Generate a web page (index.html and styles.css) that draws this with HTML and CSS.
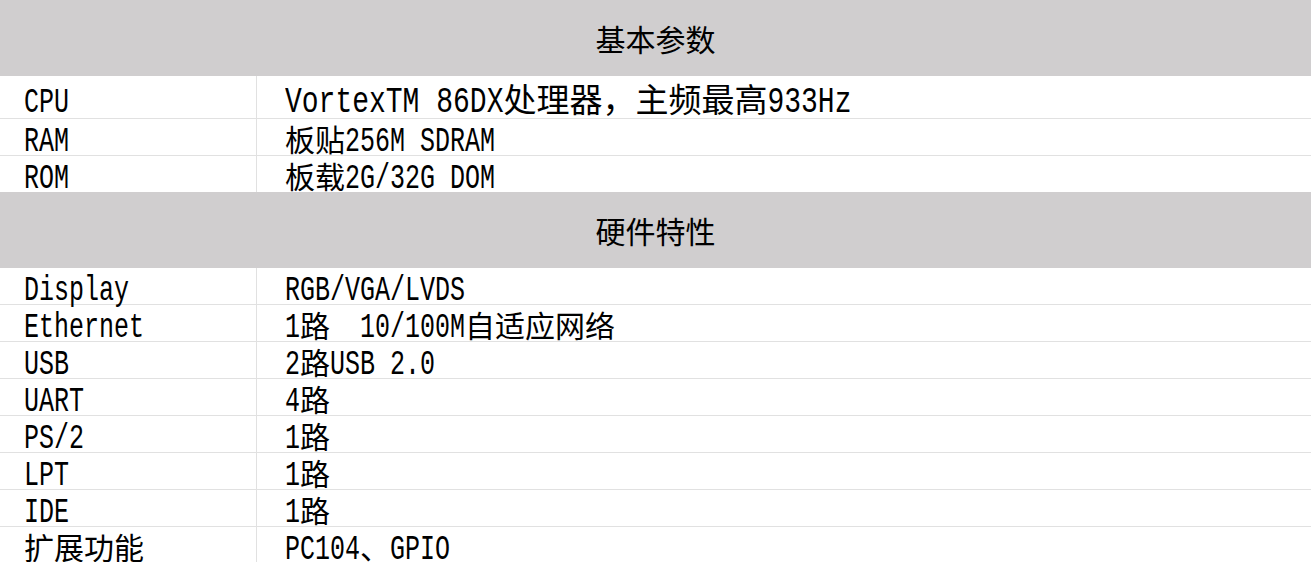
FILE: index.html
```html
<!DOCTYPE html>
<html lang="zh-CN">
<head>
<meta charset="utf-8">
<title>基本参数</title>
<link rel="stylesheet" href="styles.css">
</head>
<body>
<div class="spec">
  <div class="head">基本参数</div>
  <div class="row big"><div class="k"><span class="l">CPU</span></div><div class="v"><span class="l">VortexTM 86DX</span>处理器，主频最高<span class="l">933Hz</span></div></div>
  <div class="row"><div class="k"><span class="l">RAM</span></div><div class="v">板贴<span class="l">256M SDRAM</span></div></div>
  <div class="row last"><div class="k"><span class="l">ROM</span></div><div class="v">板载<span class="l">2G/32G DOM</span></div></div>
  <div class="head">硬件特性</div>
  <div class="row"><div class="k"><span class="l">Display</span></div><div class="v"><span class="l">RGB/VGA/LVDS</span></div></div>
  <div class="row"><div class="k"><span class="l">Ethernet</span></div><div class="v"><span class="l">1</span>路<span class="l">  10/100M</span>自适应网络</div></div>
  <div class="row"><div class="k"><span class="l">USB</span></div><div class="v"><span class="l">2</span>路<span class="l">USB 2.0</span></div></div>
  <div class="row"><div class="k"><span class="l">UART</span></div><div class="v"><span class="l">4</span>路</div></div>
  <div class="row"><div class="k"><span class="l">PS/2</span></div><div class="v"><span class="l">1</span>路</div></div>
  <div class="row"><div class="k"><span class="l">LPT</span></div><div class="v"><span class="l">1</span>路</div></div>
  <div class="row"><div class="k"><span class="l">IDE</span></div><div class="v"><span class="l">1</span>路</div></div>
  <div class="row last"><div class="k">扩展功能</div><div class="v"><span class="l">PC104</span>、<span class="l">GPIO</span></div></div>
</div>
</body>
</html>
```

FILE: styles.css
```css
html, body {
  margin: 0;
  padding: 0;
  background: #ffffff;
}

.spec {
  width: 1311px;
  font-family: "Noto Sans CJK SC", sans-serif;
  font-size: 30px;
  color: #000000;
}

.head {
  height: 76px;
  background: #d0cecf;
  text-align: center;
  line-height: 75px;
  padding-top: 1px;
  box-sizing: border-box;
}

.row {
  display: flex;
  height: 37px;
  border-bottom: 1px solid #e1e1e1;
  box-sizing: border-box;
  line-height: 35px;
}

.row.last {
  height: 36px;
  border-bottom: none;
}

.k {
  width: 257px;
  flex: none;
  border-right: 1px solid #e1e1e1;
  box-sizing: border-box;
  padding: 2px 0 0 24px;
  white-space: nowrap;
}

.v {
  flex: 1;
  padding: 2px 0 0 28px;
  white-space: nowrap;
}

.l {
  display: inline-block;
  font-family: "Liberation Mono", monospace;
  font-size: 25px;
  line-height: 20px;
  white-space: pre;
  transform: scaleY(1.4);
  transform-origin: 0 16.6px;
}

.row.big {
  height: 43px;
  font-size: 33px;
  line-height: 38px;
}

.row.big .k,
.row.big .v {
  padding-top: 3px;
}

.row.big .v .l {
  font-size: 28px;
  line-height: 22px;
  transform: scaleY(1.3);
  transform-origin: 0 18.5px;
}
```
